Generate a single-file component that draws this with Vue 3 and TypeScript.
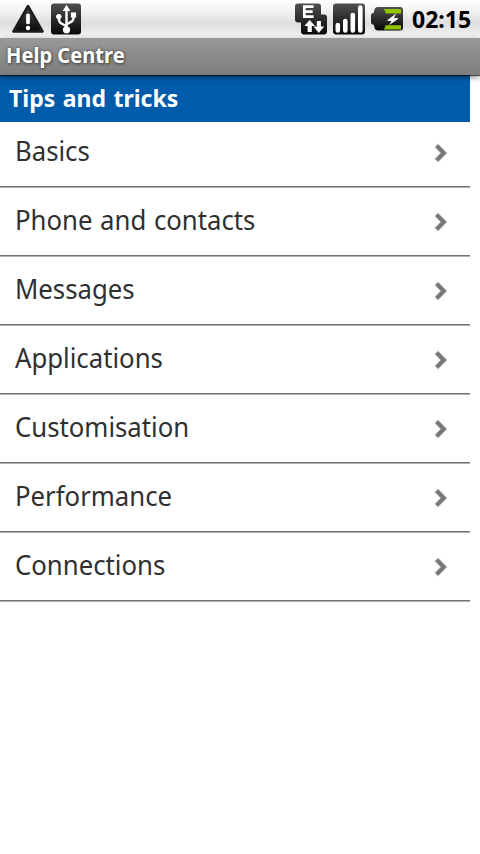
<script setup lang="ts">
interface Topic {
  label: string
}

const topics: Topic[] = [
  { label: 'Basics' },
  { label: 'Phone and contacts' },
  { label: 'Messages' },
  { label: 'Applications' },
  { label: 'Customisation' },
  { label: 'Performance' },
  { label: 'Connections' },
]
</script>

<template>
  <div class="screen">
    <header class="status">
      <svg class="warning" width="34" height="32" viewBox="0 0 34 32">
        <defs>
          <linearGradient id="dark" x1="0" y1="0" x2="0" y2="1">
            <stop offset="0" stop-color="#505050" />
            <stop offset="0.5" stop-color="#2b2b2b" />
            <stop offset="1" stop-color="#080808" />
          </linearGradient>
        </defs>
        <path d="M17 3.2 L31.4 28.4 H2.6Z" fill="url(#dark)" stroke="#1d1d1d" stroke-width="2.8" stroke-linejoin="round" />
        <path d="M17 12.5V19.4" stroke="#fff" stroke-width="3.8" stroke-linecap="round" />
        <circle cx="17" cy="25" r="2.2" fill="#fff" />
      </svg>
      <svg class="usb" width="32" height="32" viewBox="0 0 32 32">
        <rect x="1" y="0.5" width="30" height="31" rx="3" fill="url(#dark)" />
        <path d="M16.5 6V27M16.5 23.2L11 20.2Q8.8 19 8.8 14.5M16.5 21.5L21.8 18.4Q23.6 17.5 23.6 13" fill="none" stroke="#fff" stroke-width="2.4" />
        <path d="M16.5 1.8L20.4 8H12.6Z" fill="#fff" />
        <circle cx="8.8" cy="13.6" r="2.7" fill="#fff" />
        <rect x="20.9" y="9.4" width="5.2" height="5.2" fill="#fff" />
        <circle cx="16.5" cy="26.8" r="3.6" fill="#fff" />
      </svg>
      <span class="spacer"></span>
      <svg class="edge" width="34" height="32" viewBox="0 0 34 32">
        <path d="M4 0.5H24Q27 0.5 27 3.5V11.5H30Q33 11.5 33 14.5V28.5Q33 31.5 30 31.5H10Q7 31.5 7 28.5V19.5H4Q1 19.5 1 16.5V3.5Q1 0.5 4 0.5Z" fill="url(#dark)" />
        <path d="M19.6 3.6H10.3V13.6H19.6M10.3 8.6H18.6" fill="none" stroke="#fff" stroke-width="2.7" />
        <path d="M15.7 16.9L21 23H17.8V29H13.6V23H10.4ZM22.8 18H26.9V23.6H30.2L24.8 30L19.6 23.6H22.8Z" fill="#fff" />
      </svg>
      <svg class="signal" width="32" height="32" viewBox="0 0 32 32">
        <rect x="0" y="0.5" width="32" height="31" rx="3" fill="url(#dark)" />
        <path d="M4.8 22V27.4M12.3 18V27.4M19.8 12V27.4M27.3 4.5V27.4" stroke="#fff" stroke-width="4.6" stroke-linecap="round" />
      </svg>
      <svg class="battery" width="34" height="26" viewBox="0 0 34 26">
        <path d="M8 0H30Q33 0 33 3V20.5Q33 23.5 30 23.5H8Q5 23.5 4.4 20.5L3.8 17.8Q1 17.4 1 15V8.5Q1 6.2 3.8 5.8L4.4 3Q5 0 8 0Z" fill="url(#dark)" />
        <path d="M13.8 2H31V6.4H15.6Q15.4 3.8 13.8 2ZM15.6 18.2H31V22.4H13.8Q15.4 20.4 15.6 18.2Z" fill="#94c401" />
        <path d="M26.6 6.3L16.8 13.6L21.6 14.2L18.8 18.2L28.8 11.4L23.8 10.8Z" fill="#fff" />
      </svg>
      <time class="clock">02:15</time>
    </header>
    <div class="titlebar"><h1>Help Centre</h1></div>
    <main>
      <h2>Tips and tricks</h2>
      <ul>
        <li v-for="topic in topics" :key="topic.label">
          <span class="label">{{ topic.label }}</span>
          <svg class="chevron" width="16" height="22" viewBox="0 0 16 22">
            <path d="M3.2 3.2L10.8 11L3.2 18.8" fill="none" stroke="#dfe1df" stroke-width="5.8" />
            <path d="M3.6 3.6L10.8 11L3.6 18.4" fill="none" stroke="#767876" stroke-width="4" />
          </svg>
        </li>
      </ul>
    </main>
  </div>
</template>

<style>
body { background: #fff; }
</style>

<style scoped>
.screen {
  width: 480px;
  height: 854px;
  overflow: hidden;
  background: #fff;
  font-family: "Noto Sans", "Open Sans", sans-serif;
}
.status {
  display: flex;
  align-items: flex-start;
  height: 38px;
  padding: 3px 9px 0 11px;
  box-sizing: border-box;
  background: linear-gradient(#fff 0, #f4f4f4 25%, #dedede 62%, #f0f0f0 92%, #fff 100%);
}
.usb { margin-left: 5px; }
.spacer { flex: 1; }
.signal { margin-left: 5px; }
.battery { margin: 4px 0 0 5px; }
.clock {
  width: 59px;
  margin-left: 8px;
  color: #000;
  font-size: 23px;
  line-height: 33px;
  font-weight: 700;
  white-space: nowrap;
}
.titlebar {
  position: relative;
  height: 37px;
  padding-left: 6px;
  background: linear-gradient(#989998, #7c7d7c);
  box-shadow: 0 1px 0 rgba(0, 0, 0, .6), 0 2px 6px rgba(0, 0, 0, .5);
}
h1, h2 {
  margin: 0;
  color: #fff;
  font-weight: 700;
  white-space: nowrap;
}
h1 {
  font-size: 21px;
  line-height: 34px;
  text-shadow: 1px 1px 3px #444, 0 0 3px #555;
  transform: scaleX(.958);
  transform-origin: left;
}
h2 {
  width: 470px;
  height: 47px;
  padding-left: 9px;
  box-sizing: border-box;
  background: #005bab;
  font-size: 23px;
  line-height: 47px;
  word-spacing: 1.5px;
}
ul {
  width: 470px;
  margin: 0;
  padding: 0;
  list-style: none;
}
li {
  display: flex;
  align-items: flex-start;
  justify-content: space-between;
  height: 69px;
  padding: 13px 21px 0 15px;
  box-sizing: border-box;
  border-bottom: 1px solid #b4b2b2;
  box-shadow: inset 0 -1px #727272;
}
li:first-child {
  height: 66px;
  padding-top: 10px;
}
.label {
  color: #303030;
  font-size: 27px;
  line-height: 38px;
  white-space: nowrap;
  word-spacing: 1px;
  transform: scaleX(.953);
  transform-origin: left;
}
.chevron { margin-top: 10px; }
</style>
